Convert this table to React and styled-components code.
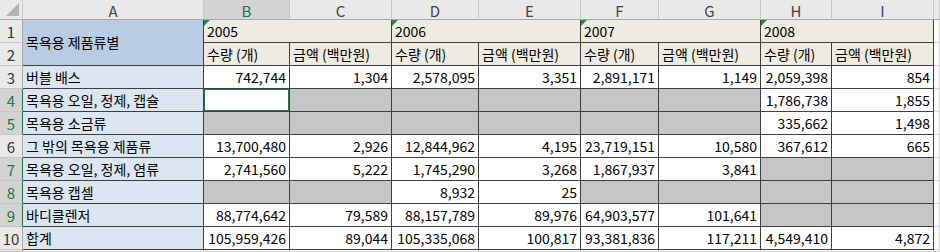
import React from "react";
import styled, { createGlobalStyle, css } from "styled-components";

const GlobalStyle = createGlobalStyle`
  html, body { margin: 0; padding: 0; background: #fff; }
  body { font-family: "Noto Sans CJK KR", "Noto Sans", sans-serif; }
`;

const GREEN = "#217346";
const LINE = "#3f3f3f";

const Sheet = styled.div`
  display: grid;
  width: 940px;
  height: 252px;
  grid-template-columns: 23px 181px 86px 102px 87px 102px 78px 102px 71px 102px 1fr;
  grid-template-rows: 20px repeat(10, 23px) 2px;
  overflow: hidden;
  font-size: 14px;
  color: #000;
`;

const Corner = styled.div`
  position: relative;
  background: #e9e9e9;
  border-right: 1px solid #c8c8c8;
  border-bottom: 1px solid #a8a8a8;
  box-sizing: border-box;
  &::after {
    content: "";
    position: absolute;
    right: 3px; bottom: 3px;
    border-style: solid;
    border-width: 0 0 13px 13px;
    border-color: transparent transparent #b4b4b4 transparent;
  }
`;

const ColHead = styled.div`
  box-sizing: border-box;
  display: flex;
  align-items: center;
  justify-content: center;
  background: ${p => (p.$sel ? "#d3d3d3" : "#e9e9e9")};
  color: ${p => (p.$sel ? GREEN : "#444")};
  border-right: 1px solid #c8c8c8;
  border-bottom: 1px solid #a8a8a8;
  font-size: 15px;
  line-height: 1;
  padding-top: 1px;
`;

const RowHead = styled.div`
  box-sizing: border-box;
  display: flex;
  align-items: center;
  justify-content: center;
  background: ${p => (p.$sel ? "#d3d3d3" : "#e9e9e9")};
  color: ${p => (p.$sel ? GREEN : "#333")};
  border-right: 1px solid ${p => (p.$sel ? GREEN : "#a8a8a8")};
  border-bottom: 1px solid #c8c8c8;
  font-size: 15px;
  line-height: 1;
`;

const Cell = styled.div`
  position: relative;
  box-sizing: border-box;
  display: flex;
  align-items: flex-end;
  justify-content: ${p => (p.$right ? "flex-end" : "flex-start")};
  padding: 0 3px 1px 3px;
  background: ${p => p.$bg || "#fff"};
  border-right: 1px solid ${LINE};
  border-bottom: 1px solid ${LINE};
  line-height: 20px;
  white-space: nowrap;
  overflow: hidden;
  ${p => p.$rows && css`grid-row: span ${p.$rows}; align-items: center;`}
  ${p => p.$cols && css`grid-column: span ${p.$cols};`}
  ${p => p.$active && css`box-shadow: inset 0 0 0 1px ${GREEN}, inset 0 0 0 2px #fff;`}
  ${p => p.$flag && css`
    &::before {
      content: "";
      position: absolute;
      left: 0; top: 0;
      border-style: solid;
      border-width: 6px 6px 0 0;
      border-color: #1e8c45 transparent transparent transparent;
    }
  `}
`;

const Blank = styled.div`
  box-sizing: border-box;
  border-right: 1px solid #d4d4d4;
  border-bottom: 1px solid #d4d4d4;
  background: #fff;
`;

const COLS = ["A", "B", "C", "D", "E", "F", "G", "H", "I", ""];
const YEARS = ["2005", "2006", "2007", "2008"];
const ACTIVE = "active";
const G = null;

const rows = [
  ["버블 배스", ["742,744", "1,304", "2,578,095", "3,351", "2,891,171", "1,149", "2,059,398", "854"]],
  ["목욕용 오일, 정제, 캡슐", [ACTIVE, G, G, G, G, G, "1,786,738", "1,855"]],
  ["목욕용 소금류", [G, G, G, G, G, G, "335,662", "1,498"]],
  ["그 밖의 목욕용 제품류", ["13,700,480", "2,926", "12,844,962", "4,195", "23,719,151", "10,580", "367,612", "665"]],
  ["목욕용 오일, 정제, 염류", ["2,741,560", "5,222", "1,745,290", "3,268", "1,867,937", "3,841", G, G]],
  ["목욕용 캡셀", [G, G, "8,932", "25", G, G, G, G]],
  ["바디클렌저", ["88,774,642", "79,589", "88,157,789", "89,976", "64,903,577", "101,641", G, G]],
  ["합계", ["105,959,426", "89,044", "105,335,068", "100,817", "93,381,836", "117,211", "4,549,410", "4,872"]],
];

const selectedRows = [4, 5, 7, 8, 9];

export default function App() {
  return (
    <>
      <GlobalStyle />
      <Sheet>
        <Corner />
        {COLS.map((c, i) => (
          <ColHead key={i} $sel={c === "B"}>{c}</ColHead>
        ))}

        <RowHead>1</RowHead>
        <Cell $rows={2} $bg="#b8cce4">목욕용 제품류별</Cell>
        {YEARS.map(y => (
          <Cell key={y} $cols={2} $bg="#eeece1" $flag>{y}</Cell>
        ))}
        <Blank />

        <RowHead>2</RowHead>
        {YEARS.map(y => (
          <React.Fragment key={y}>
            <Cell $bg="#eeece1">수량 (개)</Cell>
            <Cell $bg="#eeece1">금액 (백만원)</Cell>
          </React.Fragment>
        ))}
        <Blank />

        {rows.map(([label, vals], r) => {
          const n = r + 3;
          return (
            <React.Fragment key={n}>
              <RowHead $sel={selectedRows.includes(n)}>{n}</RowHead>
              <Cell $bg="#dce6f1">{label}</Cell>
              {vals.map((v, i) =>
                v === ACTIVE ? (
                  <Cell key={i} $active />
                ) : v === G ? (
                  <Cell key={i} $bg="#c6c6c6" />
                ) : (
                  <Cell key={i} $right>{v}</Cell>
                )
              )}
              <Blank />
            </React.Fragment>
          );
        })}

        {/* sliver of row 11 peeking in at the bottom edge */}
        <RowHead />
        {COLS.map((c, i) => (
          <Blank key={i} />
        ))}
      </Sheet>
    </>
  );
}
